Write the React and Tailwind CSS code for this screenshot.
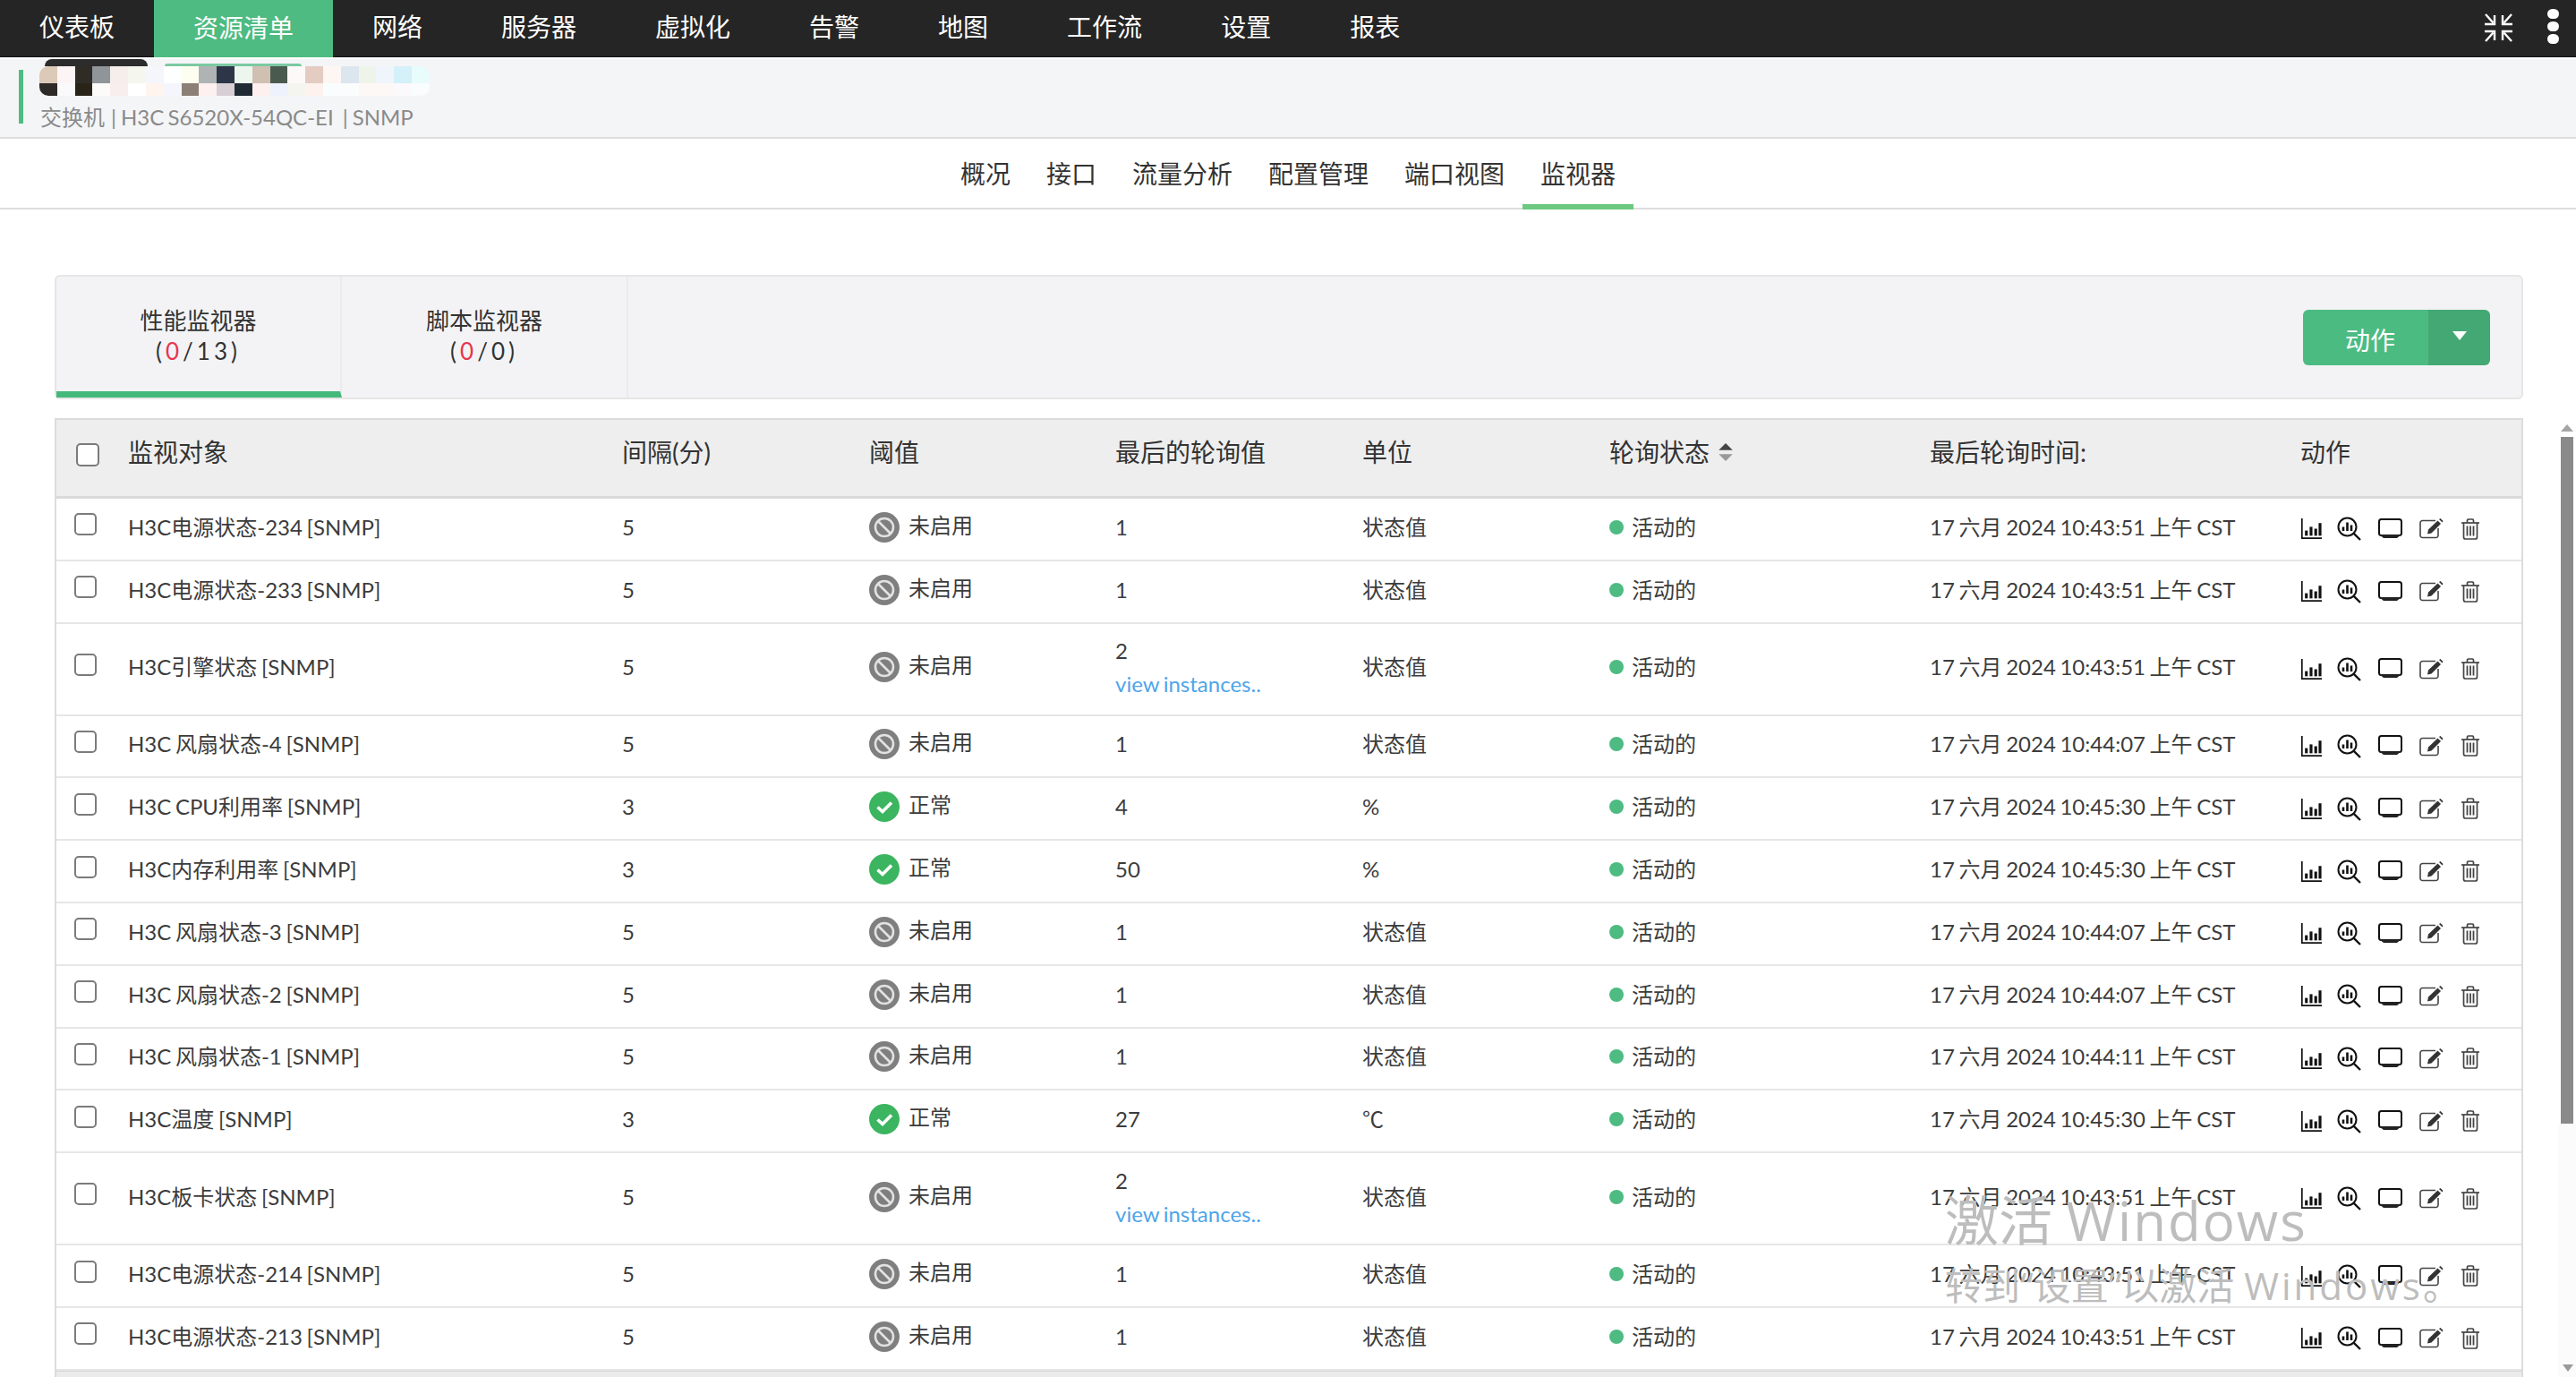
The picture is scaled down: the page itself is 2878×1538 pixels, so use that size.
import React from "react";

const FONT = '"Lato","Noto Sans CJK SC",sans-serif';
const navItems = ["仪表板", "资源清单", "网络", "服务器", "虚拟化", "告警", "地图", "工作流", "设置", "报表"];
const subTabs = ["概况", "接口", "流量分析", "配置管理", "端口视图", "监视器"];
const mosaicTop = ["#dcc9b8","#fdf5f5","#2f2c25","#90959a","#f6eeea","#f5f6ee","#f5f5fc","#feffff","#fefef0","#afb3b4","#2d3548","#ecf6ef","#cfc0b2","#4b5a4f","#fdf9f9","#e4ccc2","#fef6f3","#dbe6ee","#eef4ea","#eff5fb","#d4f0f8","#e8fcfc"];
const mosaicBottom = ["#2e2a28","#fbfafa","#2a2318","#fdfbfa","#f9eeee","#ffffff","#fff5ee","#f5f6fd","#8b7f76","#fdf0ee","#d8cfd6","#202a33","#fff0f0","#eef2fc","#f5f5ef","#fdf2ee","#f9fdfd","#fbfdfd","#fdf8f6","#fdf8f6","#fcf9fc","#fafdfe"];

const rows = [
  ["H3C电源状态-234 [SNMP]", 5, "off", "1", "状态值", "10:43:51"],
  ["H3C电源状态-233 [SNMP]", 5, "off", "1", "状态值", "10:43:51"],
  ["H3C引擎状态 [SNMP]", 5, "off", "2", "状态值", "10:43:51", true],
  ["H3C 风扇状态-4 [SNMP]", 5, "off", "1", "状态值", "10:44:07"],
  ["H3C CPU利用率 [SNMP]", 3, "ok", "4", "%", "10:45:30"],
  ["H3C内存利用率 [SNMP]", 3, "ok", "50", "%", "10:45:30"],
  ["H3C 风扇状态-3 [SNMP]", 5, "off", "1", "状态值", "10:44:07"],
  ["H3C 风扇状态-2 [SNMP]", 5, "off", "1", "状态值", "10:44:07"],
  ["H3C 风扇状态-1 [SNMP]", 5, "off", "1", "状态值", "10:44:11"],
  ["H3C温度 [SNMP]", 3, "ok", "27", "℃", "10:45:30"],
  ["H3C板卡状态 [SNMP]", 5, "off", "2", "状态值", "10:43:51", true],
  ["H3C电源状态-214 [SNMP]", 5, "off", "1", "状态值", "10:43:51"],
  ["H3C电源状态-213 [SNMP]", 5, "off", "1", "状态值", "10:43:51"],
];

const GRID = "grid grid-cols-[80px_552px_276px_275px_276px_276px_358px_414px_1fr]";

function Compress() {
  return (
    <svg width="33" height="32" viewBox="0 0 33 32" fill="none" stroke="#fff" strokeWidth="2.4">
      <path d="M2 1 L10.5 10.5" />
      <path d="M1 12 H12 V2" />
      <path d="M31 1 L22.5 10.5" />
      <path d="M32 12 H21 V2" />
      <path d="M2 31 L10.5 21.5" />
      <path d="M1 20 H12 V30" />
      <path d="M31 31 L22.5 21.5" />
      <path d="M32 20 H21 V30" />
    </svg>
  );
}

function BanIcon() {
  return (
    <svg width="34" height="34" viewBox="0 0 34 34" className="shrink-0">
      <circle cx="17" cy="17" r="17" fill="#7f7f7f" />
      <circle cx="17" cy="17" r="10" fill="none" stroke="#e2e2e2" strokeWidth="2.6" />
      <path d="M10 10 L24 24" stroke="#e2e2e2" strokeWidth="2.6" />
    </svg>
  );
}

function OkIcon() {
  return (
    <svg width="34" height="34" viewBox="0 0 34 34" className="shrink-0">
      <circle cx="17" cy="17" r="17" fill="#3bb55f" />
      <path d="M9.5 17.5 L15 22.5 L25 12.5" fill="none" stroke="#fff" strokeWidth="3.6" />
    </svg>
  );
}

function ChartIcon() {
  return (
    <svg width="23" height="23" viewBox="0 0 22 22" fill="#111">
      <path d="M0 0 H1.6 V20.4 H22 V22 H0 Z" />
      <rect x="4" y="13" width="3" height="5.5" />
      <rect x="9" y="9" width="3" height="9.5" />
      <rect x="14" y="11" width="3" height="7.5" />
      <rect x="18.6" y="5" width="3" height="13.5" />
    </svg>
  );
}

function ZoomChartIcon() {
  return (
    <svg width="27" height="27" viewBox="0 0 27 27" fill="none" stroke="#111">
      <circle cx="11.5" cy="11.5" r="10" strokeWidth="2" />
      <path d="M18.8 18.8 L26 26" strokeWidth="2.4" />
      <path d="M7 11.5 V16 M11.5 6.5 V16 M16 9.5 V16" strokeWidth="2.6" />
    </svg>
  );
}

function MonitorIcon() {
  return (
    <svg width="27" height="24" viewBox="0 0 27 24">
      <rect x="1" y="1" width="25" height="18" rx="2.5" fill="none" stroke="#111" strokeWidth="2" />
      <path d="M1 18 H26 L21 22 H6 Z" fill="#222" />
    </svg>
  );
}

function EditIcon() {
  return (
    <svg width="27" height="23" viewBox="0 0 27 23" fill="none">
      <path d="M21 11 V19 A2.5 2.5 0 0 1 18.5 21.5 H3.5 A2.5 2.5 0 0 1 1 19 V5 A2.5 2.5 0 0 1 3.5 2.5 H18" stroke="#444" strokeWidth="1.6" />
      <path d="M10 12.5 L20.5 2.5 L24 6 L13.5 16.5 L9 17.5 Z" fill="#333" />
      <path d="M22 1 L23.5 0 L26.5 3 L25.5 4.5 Z" fill="#333" />
    </svg>
  );
}

function TrashIcon() {
  return (
    <svg width="20" height="24" viewBox="0 0 20 24" fill="none" stroke="#444" strokeWidth="1.7">
      <path d="M0 5 H20" />
      <path d="M6.5 5 V2.2 Q6.5 1 7.8 1 H12.2 Q13.5 1 13.5 2.2 V5" />
      <path d="M2.5 5 V21 Q2.5 23 4.5 23 H15.5 Q17.5 23 17.5 21 V5" />
      <path d="M6.5 8.5 V19.5 M10 8.5 V19.5 M13.5 8.5 V19.5" strokeWidth="1.8" />
    </svg>
  );
}

function Row({ row }) {
  const [name, interval, state, value, unit, time, instances] = row;
  return (
    <div className={`${GRID} items-center border-b-2 border-[#e6e6e6] text-[24px] text-[#3c3c3c] pb-[4px] [word-spacing:-1.5px] ${instances ? "h-[103px]" : "h-[69.8px]"}`}>
      <div className="pl-[20px] -translate-y-[3px] flex">
        <input type="checkbox" readOnly className="appearance-none w-[25px] h-[25px] border-2 border-[#7b7b7b] rounded-[5px] bg-white" />
      </div>
      <div className="whitespace-nowrap">{name}</div>
      <div>{interval}</div>
      <div className="flex items-center gap-[10px]">
        {state === "ok" ? <OkIcon /> : <BanIcon />}
        <span className="-translate-y-[2px]">{state === "ok" ? "正常" : "未启用"}</span>
      </div>
      <div>
        <div className={instances ? "leading-[37px]" : ""}>{value}</div>
        {instances && <div className="text-[#4ea5ea] leading-[37px] whitespace-nowrap">view instances..</div>}
      </div>
      <div>{unit}</div>
      <div className="flex items-center gap-[9px]">
        <span className="w-[16px] h-[16px] rounded-full bg-[#4dbb82]" />
        <span>活动的</span>
      </div>
      <div className="whitespace-nowrap">{`17 六月 2024 ${time} 上午 CST`}</div>
      <div className="flex items-center translate-y-[2px] translate-x-px">
        <div className="w-[40px]"><ChartIcon /></div>
        <div className="w-[46px]"><ZoomChartIcon /></div>
        <div className="w-[46px]"><MonitorIcon /></div>
        <div className="w-[47px]"><EditIcon /></div>
        <div><TrashIcon /></div>
      </div>
    </div>
  );
}

export default function App() {
  return (
    <div className="relative w-[2878px] h-[1538px] overflow-hidden bg-white" style={{ fontFamily: FONT }}>
      {/* Top navigation */}
      <div className="flex justify-between h-[64px] bg-[#252525] border-b border-[#111]">
        <div className="flex">
          {navItems.map((n, i) => (
            <div key={n} className={`flex items-center px-[44px] text-[28px] text-white pb-[3px] ${i === 1 ? "bg-[#4dbb82] h-[64px]" : ""}`}>{n}</div>
          ))}
        </div>
        <div className="flex items-start">
          <div className="mt-[15px] mr-[38px]"><Compress /></div>
          <div className="mt-[10px] mr-[19px] flex flex-col gap-[3px]">
            <span className="block w-[13px] h-[11px] rounded-full bg-white" />
            <span className="block w-[13px] h-[11px] rounded-full bg-white" />
            <span className="block w-[13px] h-[11px] rounded-full bg-white" />
          </div>
        </div>
      </div>

      {/* Device band */}
      <div className="flex h-[89px] mt-[2px] bg-[#f4f5f7] border-b-2 border-[#dedede]">
        <div className="ml-[21px] mt-[12px] w-[5px] h-[60px] bg-[#4dbb82]" />
        <div className="ml-[18px] flex flex-col">
          <div className="flex items-end h-[8px]">
            <span className="ml-[6px] w-[115px] h-[8px] rounded-t-full bg-[#2c2c2c]" />
            <span className="ml-[19px] w-[153px] h-[3px] rounded-t-full bg-[#7cc8a2]" />
          </div>
          <div className="w-[436px] rounded-[10px] overflow-hidden">
            <div className="flex h-[19px]">
              {mosaicTop.map((c, i) => <span key={i} className="flex-1" style={{ backgroundColor: c }} />)}
            </div>
            <div className="flex h-[14px]">
              {mosaicBottom.map((c, i) => <span key={i} className="flex-1" style={{ backgroundColor: c }} />)}
            </div>
          </div>
          <div className="mt-[9px] text-[24px] leading-[30px] text-[#8a8a8a] whitespace-nowrap ml-px [word-spacing:-2px]">
            交换机<span className="ml-[7px] mr-[5px]">|</span>H3C S6520X-54QC-EI<span className="ml-[10px] mr-[5px]">|</span>SNMP
          </div>
        </div>
      </div>

      {/* Sub tabs */}
      <div className="flex justify-center h-[79px] border-b-2 border-[#dedede] bg-white">
        {subTabs.map((t, i) => (
          <div key={t} className={`flex items-center px-[20px] h-[79px] text-[28px] text-[#333] pt-[5px] border-b-[6px] ${i === 5 ? "border-[#6cc97f]" : "border-transparent"}`}>{t}</div>
        ))}
      </div>

      {/* Monitor tabs */}
      <div className="mt-[73px] ml-[61px] w-[2758px] h-[139px] flex justify-between bg-[#f3f3f5] border-2 border-[#e6e6e6] rounded-[6px]">
        <div className="flex">
          <div className="w-[319px] flex flex-col items-center justify-center border-b-[7px] border-[#45b97b] border-r-2 border-r-[#ebebee] text-[#333] text-[26px] leading-[34px] pt-[3px]">
            <div>性能监视器</div>
            <div className="tracking-[4px]">(<span className="text-[#e8354f]">0</span>/13)</div>
          </div>
          <div className="w-[320px] flex flex-col items-center justify-center border-r-2 border-[#ebebee] text-[#333] text-[26px] leading-[34px] pb-[3px]">
            <div>脚本监视器</div>
            <div className="tracking-[4px]">(<span className="text-[#e8354f]">0</span>/0)</div>
          </div>
        </div>
        <div className="mt-[37px] mr-[35px] flex h-[62px] w-[209px] rounded-[6px] overflow-hidden text-white">
          <div className="w-[140px] flex items-center justify-center bg-[#4bbb82] text-[28px] pt-[5px] pl-[10px]">动作</div>
          <div className="flex-1 flex items-center justify-center bg-[#43a873]">
            <svg width="16" height="10" viewBox="0 0 16 10" className="-mt-[5px]"><path d="M0 0 H16 L8 10 Z" fill="#fff" /></svg>
          </div>
        </div>
      </div>

      {/* Table + scrollbar */}
      <div className="flex mt-[21px] ml-[61px]">
        <div className="w-[2758px] border-x-2 border-t-2 border-[#dcdcdc]">
          <div className={`${GRID} items-center h-[88px] bg-[#eeeeee] border-b-[3px] border-[#d9d9d9] text-[28px] text-[#333]`}>
            <div className="pl-[22px] flex -translate-y-[4px]">
              <input type="checkbox" readOnly className="appearance-none w-[26px] h-[26px] border-2 border-[#7b7b7b] rounded-[5px] bg-white" />
            </div>
            {["监视对象", "间隔(分)", "阈值", "最后的轮询值", "单位"].map((h) => (
              <div key={h} className="pb-[13px]">{h}</div>
            ))}
            <div className="pb-[13px] flex items-center gap-[9px]">
              轮询状态
              <svg width="18" height="20" viewBox="0 0 16 18"><path d="M8 0 L15 7 H1 Z" fill="#444" /><path d="M8 18 L15 11 H1 Z" fill="#999" /></svg>
            </div>
            <div className="pb-[13px] whitespace-nowrap">最后轮询时间:</div>
            <div className="pb-[13px]">动作</div>
          </div>
          {rows.map((r) => <Row key={r[0]} row={r} />)}
          <div className="h-[10px] border-t border-[#d5d5d5] bg-[#ebebeb] flex justify-center">
            <span className="mt-[7px] w-[91px] h-[3px] bg-[#bdbdbd]" />
          </div>
        </div>
        <div className="ml-[39px] w-[20px] flex flex-col items-center">
          <svg width="14" height="8" viewBox="0 0 14 8" className="mt-[7px]"><path d="M7 0 L14 8 H0 Z" fill="#a5a5a5" /></svg>
          <div className="mt-[6px] w-[14px] h-[767px] bg-[#8a8a8a]" />
          <div className="flex-1 w-[20px] bg-[#fbfbfb]" />
        </div>
      </div>
      <svg width="12" height="8" viewBox="0 0 12 8" className="absolute left-[2863px] top-[1524px]"><path d="M0 0 H12 L6 8 Z" fill="#9a9a9a" /></svg>

      {/* Windows activation watermark */}
      <div className="absolute left-[2173px] top-[1327px] text-[#bdbdbd] pointer-events-none whitespace-nowrap" style={{ fontFamily: '"Open Sans","Noto Sans CJK SC",sans-serif' }}>
        <div className="text-[60px] leading-[72px]">激活 <span className="tracking-[2px]">Windows</span></div>
        <div className="text-[42px] leading-[50px] mt-[12px]">转到“设置”以激活 <span className="tracking-[3px]">Windows</span>。</div>
      </div>
    </div>
  );
}
